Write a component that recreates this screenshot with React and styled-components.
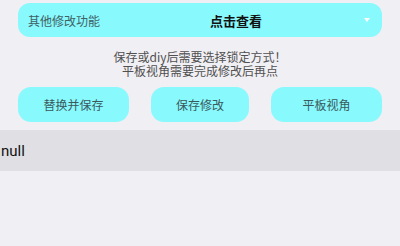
import React from 'react'
import styled, { createGlobalStyle } from 'styled-components'

const GlobalStyle = createGlobalStyle`
  html, body {
    margin: 0;
    padding: 0;
    background: #f0eff4;
    font-family: "Noto Sans CJK SC", "Noto Sans", sans-serif;
  }
`

const Page = styled.div`
  width: 400px;
  height: 246px;
  padding-top: 3px;
  box-sizing: border-box;
  background: #f0eff4;
  overflow: hidden;
`

const Top = styled.div`
  padding: 0 18px;
`

const SelectBar = styled.div`
  height: 34px;
  border-radius: 12px;
  background: #88f9fd;
  display: flex;
  align-items: center;
  padding: 0 12px 0 10px;
`

const SelectLabel = styled.div`
  font-size: 12px;
  color: #3f6164;
`

const SelectValue = styled.div`
  flex: 1;
  text-align: center;
  font-size: 13px;
  font-weight: 600;
  color: #111;
  padding-left: 8px;
`

const Caret = styled.div`
  width: 0;
  height: 0;
  border-left: 3.5px solid transparent;
  border-right: 3.5px solid transparent;
  border-top: 4px solid #ffffff;
`

const Hint = styled.div`
  margin-top: 13px;
  text-align: center;
  font-size: 12px;
  line-height: 14px;
  color: #505050;
`

const Actions = styled.div`
  margin-top: 9px;
  padding: 0 18px;
  display: flex;
  justify-content: space-between;
`

const ActionButton = styled.button`
  width: ${(p) => p.width}px;
  height: 35px;
  border: 0;
  border-radius: 13px;
  background: #88f9fd;
  font-family: inherit;
  font-size: 12px;
  color: #3a5a5e;
  padding: 0;
`

const Result = styled.div`
  margin-top: 8px;
  height: 41px;
  background: #e0dfe4;
  display: flex;
  align-items: center;
  padding-left: 1px;
  font-family: "Roboto", "Noto Sans", sans-serif;
  font-size: 15px;
  color: #111;
`

export default function App() {
  return (
    <>
      <GlobalStyle />
      <Page>
        <Top>
          <SelectBar>
            <SelectLabel>其他修改功能</SelectLabel>
            <SelectValue>点击查看</SelectValue>
            <Caret />
          </SelectBar>
        </Top>
        <Hint>
          保存或diy后需要选择锁定方式！
          <br />
          平板视角需要完成修改后再点
        </Hint>
        <Actions>
          <ActionButton width={111}>替换并保存</ActionButton>
          <ActionButton width={98}>保存修改</ActionButton>
          <ActionButton width={111}>平板视角</ActionButton>
        </Actions>
        <Result>null</Result>
      </Page>
    </>
  )
}
